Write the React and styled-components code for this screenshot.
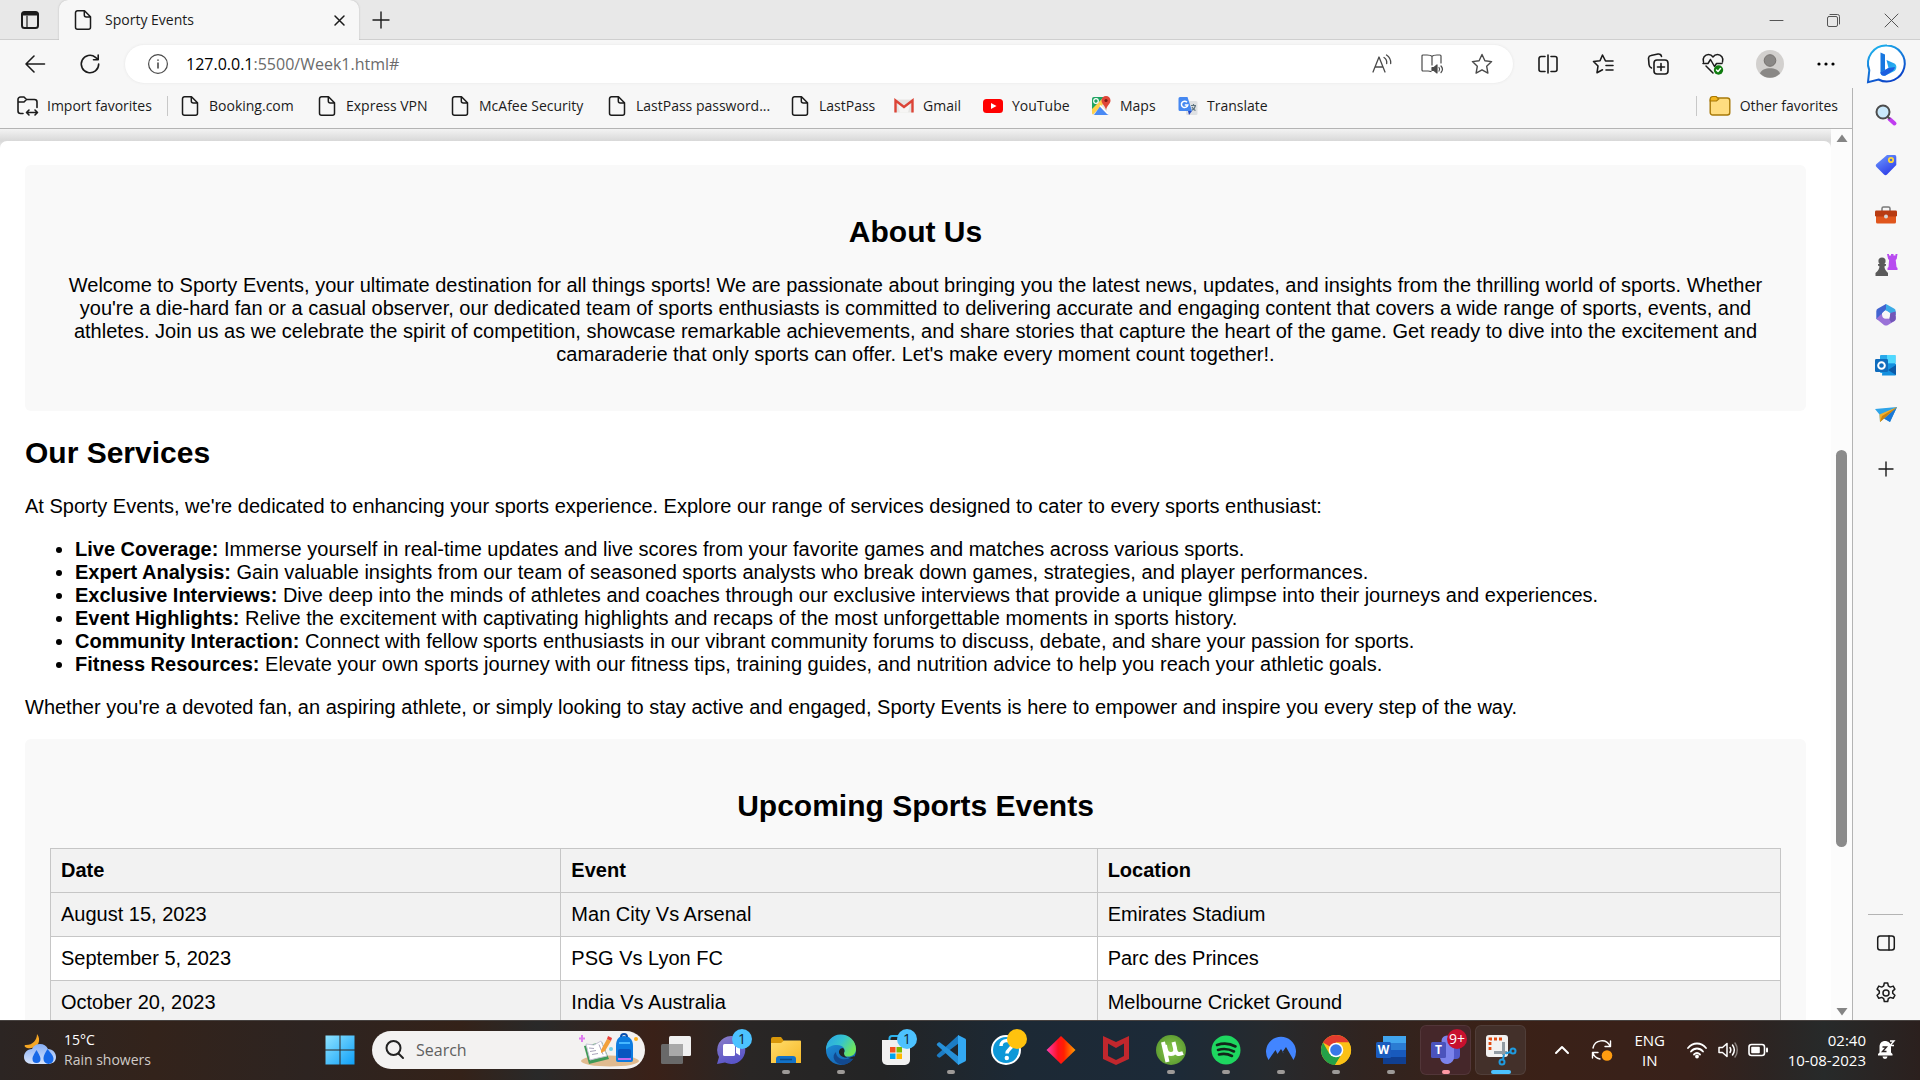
import React from "react";
import styled, { createGlobalStyle, css } from "styled-components";

const uiFont = `"Open Sans", "Noto Sans", sans-serif`;
const pageFont = `"Liberation Sans", Arial, sans-serif`;

const GlobalStyle = createGlobalStyle`
  *, *::before, *::after { box-sizing: border-box; }
  html, body, #root { height: 100%; }
  body { margin: 0; overflow: hidden; background: #f7f7f7; }
  button, input { font: inherit; color: inherit; border: 0; padding: 0; margin: 0; background: none; }
  svg { display: block; flex: none; overflow: visible; }
  a { color: inherit; text-decoration: none; }
`;

/* ---------- window ---------- */

const Desktop = styled.div`
  height: 100vh;
  display: flex;
  flex-direction: column;
  font-family: ${uiFont};
  font-size: 14px;
  line-height: 20px;
  color: #1b1b1b;
`;

const TabStrip = styled.header`
  flex: none;
  height: 40px;
  display: flex;
  align-items: stretch;
  background: #e8e8e8;
  box-shadow: inset 0 -1px 0 #cfcfcf;
`;

const IconButton = styled.button`
  flex: none;
  width: ${(p) => p.$w || 55}px;
  display: flex;
  align-items: center;
  justify-content: center;
`;

const Tab = styled.div`
  width: 300px;
  display: flex;
  align-items: center;
  gap: 12px;
  padding: 0 14px;
  background: #f7f7f7;
  border-radius: 9px 9px 0 0;
  box-shadow: 0 0 2px #b5b5b5;
  clip-path: inset(0 -3px 0 -3px);
`;

const TabTitle = styled.span`
  flex: 1;
`;

const WindowControls = styled.div`
  margin-left: auto;
  display: flex;
`;

const BrowserBody = styled.div`
  flex: 1;
  min-height: 0;
  display: flex;
`;

const MainColumn = styled.div`
  flex: 1;
  min-width: 0;
  display: flex;
  flex-direction: column;
`;

const Toolbar = styled.div`
  flex: none;
  height: 48px;
  display: flex;
  align-items: center;
  padding-left: 7px;
  background: #f7f7f7;
`;

const AddressBar = styled.div`
  flex: 1;
  height: 38px;
  margin: 0 7px 0 8px;
  padding: 0 6px 0 5px;
  display: flex;
  align-items: center;
  background: #fff;
  border-radius: 19px;
  box-shadow: 0 0 3px #e4e4e4;
  font-size: 16px;
`;

const Host = styled.label`
  margin-left: 1px;
  color: #000;
`;

const UrlInput = styled.input`
  flex: 1;
  min-width: 0;
  color: #6b6b6b;
  outline: none;
`;

const FavoritesBar = styled.nav`
  flex: none;
  height: 41px;
  display: flex;
  align-items: center;
  padding: 0 14px 4px 17px;
  background: #f7f7f7;
  border-bottom: 1px solid #b4b4b4;
`;

const Favorite = styled.a`
  width: ${(p) => p.$w}px;
  display: flex;
  align-items: center;
  gap: 9px;
  white-space: nowrap;
`;

const Divider = styled.span`
  width: 1px;
  height: 20px;
  margin-right: 12px;
  background: #c8c8c8;
`;

const PushRight = styled.div`
  margin-left: auto;
  display: flex;
  align-items: center;
`;

/* ---------- web page ---------- */

const Viewport = styled.div`
  flex: 1;
  min-height: 0;
  display: flex;
`;

const PageArea = styled.main`
  flex: 1;
  min-width: 0;
  overflow: hidden;
  padding-top: 12px;
  background: linear-gradient(#f3f3f3, #d8d8d8 12px, #fff 24px);
  font-family: ${pageFont};
  font-size: 20px;
  line-height: 23px;
  color: #000;
`;

const Sheet = styled.div`
  background: #fff;
  border-radius: 7px 7px 0 0;
  padding: 24px 25px;
`;

const Card = styled.section`
  display: flow-root;
  padding: 25px;
  background: #f9f9f9;
  border-radius: 6px;
  text-align: center;
`;

const Heading = styled.h2`
  margin: 25px 0;
  font-size: 30px;
  line-height: 34px;
`;

const Paragraph = styled.p`
  margin: 20px 0;
`;

const ServiceList = styled.ul`
  margin: 20px 0;
  padding-left: 50px;
`;

const EventTable = styled.table`
  width: 100%;
  border-collapse: collapse;
  background: #fff;
  text-align: left;
  th, td {
    border: 1px solid #c6c6c6;
    padding: 10px;
  }
  th, tbody tr:nth-child(odd) { background: #f2f2f2; }
  th:nth-child(1) { width: 29.5%; }
  th:nth-child(2) { width: 31%; }
`;

const ScrollBar = styled.div`
  flex: none;
  width: 21px;
  display: flex;
  flex-direction: column;
  align-items: center;
  padding: 5px 0 4px;
  background: #fcfcfc;
`;

const Thumb = styled.div`
  flex: 396;
  width: 11px;
  border-radius: 6px;
  background: #8b8b8b;
`;

const Space = styled.div`
  flex: ${(p) => p.$n};
`;

/* ---------- sidebar ---------- */

const SideColumn = styled.aside`
  flex: none;
  width: 68px;
  display: flex;
  flex-direction: column;
  background: #f7f7f7;
`;

const BingButton = styled(IconButton)`
  width: 68px;
  height: 48px;
`;

const SideRail = styled.div`
  flex: 1;
  display: flex;
  flex-direction: column;
  align-items: center;
  border-left: 1px solid #b4b4b4;
  padding: 2px 2px 2px 0;
`;

const SideButton = styled(IconButton)`
  width: 50px;
  height: 50px;
`;

const AddSideButton = styled(SideButton)`
  margin-top: 4px;
`;

const RailRule = styled.hr`
  width: 35px;
  margin: auto 0 3px;
  border: 0;
  border-top: 1px solid #b4b4b4;
`;

/* ---------- taskbar ---------- */

const Taskbar = styled.footer`
  flex: none;
  height: 60px;
  padding-bottom: 2px;
  display: flex;
  align-items: center;
  color: #fff;
  border-top: 1px solid #474240;
  background: linear-gradient(90deg, #2c2523 0%, #33231b 8%, #2d2421 16%, #342219 24%, #292929 28%,
    #3a2118 34%, #292625 39%, #232425 46%, #1c2935 53%, #1c2a38 61%, #262a2e 66%, #302420 71%, #3b2117 78%,
    #38211a 88%, #2c2422 92%, #272a2a 95%, #2b201e 100%);
`;

const Weather = styled.button`
  width: 312px;
  padding-left: 24px;
  display: flex;
  align-items: center;
  gap: 8px;
  text-align: left;
`;

const Stack = styled.span`
  display: flex;
  flex-direction: column;
  text-align: ${(p) => p.$align || "left"};
  line-height: 20px;
`;

const Soft = styled.span`
  color: #d0cbc8;
`;

const SearchBox = styled.label`
  width: 273px;
  height: 38px;
  margin: 0 3px 0 5px;
  padding: 0 6px 0 13px;
  display: flex;
  align-items: center;
  gap: 12px;
  border-radius: 19px;
  background: #f3f2f1;
  font-size: 16px;
`;

const SearchInput = styled.input`
  flex: 1;
  min-width: 0;
  outline: none;
  &::placeholder { color: #5f5f5f; opacity: 1; }
`;

const AppButton = styled.button`
  position: relative;
  flex: none;
  width: 51px;
  height: 50px;
  margin: 0 2px;
  display: flex;
  align-items: center;
  justify-content: center;
  border-radius: 6px;
  ${(p) => p.$tone && css`background: ${p.$tone}; box-shadow: inset 0 0 0 1px #ffffff12;`}
`;

const RunMark = styled.span`
  position: absolute;
  bottom: 1px;
  left: 50%;
  transform: translateX(-50%);
  width: ${(p) => (p.$active ? 20 : 8)}px;
  height: 4px;
  border-radius: 2px;
  background: ${(p) => p.$color || "#9d9a98"};
`;

const Badge = styled.span`
  position: absolute;
  top: 4px;
  right: 4px;
  width: 20px;
  height: 20px;
  border-radius: 50%;
  background: ${(p) => p.$bg};
  color: ${(p) => p.$fg || "#10222e"};
  font-size: 14px;
  line-height: 20px;
  text-align: center;
`;

const Tray = styled.div`
  margin-left: auto;
  padding-right: 24px;
  display: flex;
  align-items: center;
  font-size: 15px;
`;

const TrayButton = styled.button`
  width: ${(p) => p.$w}px;
  height: 48px;
  display: flex;
  align-items: center;
  justify-content: center;
`;

const Clock = styled.button`
  display: flex;
  align-items: center;
  gap: 10px;
  margin-left: 12px;
`;

/* ---------- drawings ---------- */

const Svg = ({ w = 20, h, vb = "0 0 20 20", sw = 1.4, stroke = "#1b1b1b", children }) => (
  <svg width={w} height={h || w} viewBox={vb} fill="none" stroke={stroke} strokeWidth={sw} strokeLinecap="round" strokeLinejoin="round" aria-hidden="true">
    {children}
  </svg>
);
const F = ({ w = 30, h, vb = "0 0 30 30", children }) => (
  <svg width={w} height={h || w} viewBox={vb} aria-hidden="true">{children}</svg>
);

const DocIcon = () => (
  <Svg sw={1.5}><path d="M4.500 .8h7l6 6v10.400a2 2 0 0 1-2 2h-11a2 2 0 0 1-2-2v-14.400a2 2 0 0 1 2-2z M11.300 1v4a2 2 0 0 0 2 2h4" /></Svg>
);
const Star = () => (
  <Svg w={22} vb="0 0 22 22" stroke="#4a4a4a"><path d="M11 1.500l2.900 6.200 6.700.9-4.900 4.700 1.200 6.800L11 16.800l-5.900 3.300 1.200-6.800L1.400 8.600l6.700-.9z" /></Svg>
);

const GmailIcon = () => (
  <F w={20} vb="0 0 20 20"><path d="M1 3.500h18v13H1z" fill="#e6e4e2" /><path d="M3 5l7 6 7-6-3 11.500H6z" fill="#f6f5f4" /><path d="M1.500 16.500V4.500L10 11l8.500-6.500v12" fill="none" stroke="#dc4437" strokeWidth="2.400" /></F>
);
const YouTubeIcon = () => (
  <F w={20} vb="0 0 20 20"><rect y="3" width="20" height="14" rx="3.500" fill="#f00" /><path d="M8 7l5.500 3L8 13z" fill="#fff" /></F>
);
const MapsIcon = () => (
  <F w={20} vb="0 0 20 20"><path d="M1 3a2 2 0 0 1 2-2h13v17a1 1 0 0 1-1 1H3a2 2 0 0 1-2-2z" fill="#e8e6e0" /><path d="M1 3a2 2 0 0 1 2-2h10L1 14z" fill="#1fa463" /><path d="M1 13L13 1l2 4L2 18.500l-1-1z" fill="#ffd04b" /><path d="M9 10.500l8.500 8.500H3z" fill="#4a8af4" /><path d="M9 9.500l8 8.500" stroke="#fff" strokeWidth="1.500" /><path d="M15 0a4.500 4.500 0 0 1 4.500 4.500C19.500 8 16 9 15 14c-1-5-4.500-6-4.500-9.500A4.500 4.500 0 0 1 15 0z" fill="#e04638" /><circle cx="15" cy="4.500" r="1.600" fill="#7b1c15" /><circle cx="5" cy="5" r="2.300" fill="none" stroke="#fff" strokeWidth="1.200" /></F>
);
const TranslateIcon = () => (
  <F w={20} vb="0 0 20 20"><rect x="8" y="5" width="11.500" height="14" rx="1.500" fill="#dfe1e3" /><path d="M13 9.500h5M15.500 8v1.500M17.500 9.500c-.6 2.500-2 4-3.500 4.800M14 11c.8 1.600 2 2.800 3.500 3.500" stroke="#607580" fill="none" strokeWidth="1.200" /><path d="M2 1h7.500L14 15H2a1.500 1.500 0 0 1-1.500-1.500v-11A1.500 1.500 0 0 1 2 1z" fill="#4688f1" /><path d="M10 15h4l-3 4z" fill="#2447c4" /><path d="M9 6.200A3.200 3.200 0 1 0 9.800 9H6.800" stroke="#fff" fill="none" strokeWidth="1.500" /></F>
);
const FolderYellow = () => (
  <F w={22} h={22} vb="0 0 22 22"><rect x="1.200" y="3" width="19.600" height="17" rx="2.500" fill="#ffdd80" stroke="#a87908" strokeWidth="1.400" /><path d="M1.200 6V4a2.500 2.500 0 0 1 2.500-2.500h3.500L9.800 4 7.500 6z" fill="#f2b61e" stroke="#a87908" strokeWidth="1.200" /></F>
);
const ImportIcon = () => (
  <Svg w={21} h={20} vb="0 0 21 20" sw={1.600}><path d="M6 17.500H3.500A2.500 2.500 0 0 1 1 15V3.500A2.500 2.500 0 0 1 3.500 1H7l2.500 2.500h8A2.500 2.500 0 0 1 20 6v5.500M1 6h6l2.500-2.500M10 16.500h10M12 14l-2.500 2.500L12 19M18 14l2.500 2.500L18 19" /></Svg>
);

const Bing = () => (
  <F w={40} vb="0 0 40 40">
    <defs><linearGradient id="bg1" x1="0" y1="0" x2="0.500" y2="1"><stop offset="0" stopColor="#20bdf0" /><stop offset="1" stopColor="#0b45c9" /></linearGradient>
      <linearGradient id="bg2" x1="0" y1="0" x2="1" y2="1"><stop offset="0" stopColor="#1685e8" /><stop offset="1" stopColor="#35c8f5" /></linearGradient></defs>
    <path d="M21 1.500a18 18 0 1 1-8.500 34L2 38.200l1.300-12A18 18 0 0 1 21 1.500z" fill="#fff" stroke="url(#bg1)" strokeWidth="2" />
    <path d="M14.500 8.500l4.500 2v15.500l-4.500 3.500z" fill="#1877e0" /><path d="M20.500 16l8 3.500c2.500 1.500 2.500 5.500 0 7.500l-9 4.500c-2.500 1-5-.5-5-3l8-4.500z" fill="url(#bg2)" /><path d="M14.500 28.500l8-4.500 6.500-1c-.5 2.500-2 4-4 5l-5.500 3.500c-2.500 1-5-.5-5-3z" fill="#1d5fe0" />
  </F>
);

const SideSearch = () => (
  <F w={22} vb="0 0 22 22"><path d="M14.500 15l5 4.500" stroke="#c03df0" strokeWidth="4" strokeLinecap="round" /><path d="M12 12l3 3" stroke="#555" strokeWidth="2" /><circle cx="8" cy="8" r="6.500" fill="#c9e8fb" stroke="#4c4c4c" strokeWidth="2" /></F>
);
const SideTag = () => (
  <F w={22} vb="0 0 22 22"><defs><linearGradient id="tg" x1="0" y1="0" x2=".6" y2="1"><stop stopColor="#6f9cff" /><stop offset="1" stopColor="#2f3fe8" /></linearGradient></defs><path d="M12 1h7.500A1.800 1.800 0 0 1 21.300 3v8L12 20.500c-1 1-2 1-3 0L1.500 13c-1-1-1-2 0-3z" fill="url(#tg)" /><circle cx="16" cy="6" r="2.200" fill="#4b6ad8" stroke="#ffd83a" strokeWidth="1.800" /></F>
);
const SideTools = () => (
  <F w={22} vb="0 0 22 22"><path d="M7 7V4.500A1.500 1.500 0 0 1 8.500 3h5A1.500 1.500 0 0 1 15 4.500V7" fill="none" stroke="#7a7a7a" strokeWidth="1.500" /><rect x="1" y="9" width="20" height="10.500" rx="1.500" fill="#e0561d" /><rect y="6.500" width="22" height="6" rx="1.200" fill="#b83b12" /><circle cx="11" cy="12.500" r="2" fill="#d5d5d5" /></F>
);
const SideGames = () => (
  <F w={24} h={22} vb="0 0 24 22"><path d="M13 0h2v1.500h2V0h2.500v1.500h2V0h2l-.8 5-1 1 .8 7 1 1v2h-10v-2l1-1 .6-7-1-1z" fill="#b84bf0" /><g fill="#5a5a5a"><circle cx="8" cy="7" r="3.600" /><path d="M4 10h8v1.500l-1.600 1c.2 2.500 1.200 4 3.600 6.500v3H1.500v-3C4 17 5.200 15 5.500 12.500L4 11.500z" /></g></F>
);
const SideOffice = () => (
  <F w={22} vb="0 0 22 22"><path d="M11 0l8 4.500a3 3 0 0 1 1.700 2.700v4L14 8.500l-3.300-2.200L7.500 8z" fill="#3cabe6" /><path d="M11 0L3 4.500a3 3 0 0 0-1.700 2.700V15l5.700 2.200V9.500L11 5z" fill="#4264d0" /><path d="M1.300 14.800L9 21a4 4 0 0 0 4 0l6.500-4a3 3 0 0 0 1.300-2.500V12l-6.500 3-5-2-3-3z" fill="#9a72d8" /><path d="M20.700 7.500v7a3 3 0 0 1-1.400 2.500l-3 1.500-2-3.500 1-6z" fill="#7257b8" /><circle cx="11" cy="11" r="3.800" fill="#f7f7f7" /></F>
);
const SideOutlook = () => (
  <F w={22} vb="0 0 22 22"><rect x="5" y="1" width="15.500" height="18" rx="1" fill="#28a8ea" /><path d="M12 1h8.500v8H12z" fill="#50d9ff" /><path d="M8 10h13v10.500a1 1 0 0 1-1 1H7z" fill="#1490df" /><path d="M21 11v10l-8-5z" fill="#0c5aa8" /><rect y="5" width="13" height="13" rx="1.200" fill="#0f6cbd" /><circle cx="6.500" cy="11.500" r="3.300" fill="none" stroke="#fff" strokeWidth="2" /></F>
);
const SidePlane = () => (
  <F w={22} vb="0 0 22 22"><path d="M0 5l22-2-7 15-6-3.500L5 18l-.500-7.500z" fill="#2fa4e8" /><path d="M22 3L9 14.500l6 3.500z" fill="#1a77d6" /><path d="M22 3L4.500 10.500 5 18l4-3.500z" fill="#f5b02a" /><path d="M22 3L9 14.500 5 18l2-6z" fill="#c98212" /></F>
);
const Gear = () => (
  <Svg w={22} vb="0 0 22 22" sw={1.500}><circle cx="11" cy="11" r="3" /><path d="M9.300 1h3.400l.6 2.900 2 1.200 2.900-1 1.700 3-2.200 2v2.200l2.200 2-1.700 3-2.900-.9-2 1.200-.6 2.900H9.300l-.6-2.900-2-1.200-2.900.9-1.700-3 2.200-2V9.100l-2.200-2 1.700-3 2.900 1 2-1.200z" /></Svg>
);

const WeatherIcon = () => (
  <F w={32} vb="0 0 32 32"><defs><linearGradient id="cl" x1="0" y1="0" x2="0" y2="1"><stop stopColor="#86aef5" /><stop offset="1" stopColor="#d7e4fb" /></linearGradient></defs><path d="M13 0c5 6 1 16-10 14C0 13 0 11 2 11 9 11 13 6 13 0z" fill="#f5a623" /><path d="M8 15a9 9 0 0 1 16 0c5 0 8 4 8 8 0 5-4 7-8 7H8c-5 0-8-3-8-7s3-8 8-8z" fill="url(#cl)" /><path d="M12.500 16c3 5 4 7 4 9a4 4 0 0 1-8 0c0-2 1-4 4-9zM23.500 15c4 5 6 7 6 10a5 5 0 0 1-10 0c0-3 1-5 4-10z" fill="#1668e8" /></F>
);
const WinLogo = () => (
  <F><defs><linearGradient id="wn" x1="0" y1="0" x2="1" y2="1"><stop stopColor="#8fe3ff" /><stop offset="1" stopColor="#0fa0f8" /></linearGradient></defs><path d="M.5 .5h14v14H.500zM15.500 .5h14v14h-14zM.5 15.500h14v14H.500zM15.500 15.500h14v14h-14z" fill="url(#wn)" /></F>
);
const SearchArt = () => (
  <F w={60} h={34} vb="0 0 60 34"><ellipse cx="31" cy="28" rx="29" ry="5.500" fill="#e0bb8f" /><path d="M5 13l18-4 7 17-20 5z" fill="#3f9a57" /><path d="M7 11l8 1 7-4 6 15-9 2-8 2z" fill="#fff" stroke="#c8c4d8" /><path d="M10 15l5 .5m-4 3l6-1m-4 4l6-1m1-9l4 10" stroke="#a9a4bb" fill="none" /><path d="M22 17l6-11 4 2-6 10-4 2z" fill="#f3a13a" /><path d="M28 6l1-3 4 2-1 3z" fill="#e8413a" /><path d="M3 2v7M0 5.500h6" stroke="#e07cf0" strokeWidth="2" /><circle cx="32" cy="16" r="2" fill="#6fd0e8" /><circle cx="57" cy="6" r="2" fill="#ffb11f" /><path d="M37 13c0-7 3-10 8-10s9 3 9 10v14a2 2 0 0 1-2 2H39a2 2 0 0 1-2-2z" fill="#0c7be0" /><path d="M42 4c0-4 6-4 6 0" fill="none" stroke="#0a4fae" strokeWidth="2" /><rect x="39" y="16" width="13" height="9" rx="2" fill="#0a56c0" /><path d="M39 26h13" stroke="#c66cf0" strokeWidth="2" /><path d="M40 10h11" stroke="#46b8ff" strokeWidth="2" /></F>
);
const TaskView = () => (
  <F><rect x="8" y="1" width="22" height="20" rx="1.500" fill="#f0f0f0" /><rect x="0" y="9" width="22" height="20" rx="1.500" fill="#696969" /><path d="M8 9h14v12H8z" fill="#a9a9a9" /></F>
);
const ChatIcon = () => (
  <F><defs><linearGradient id="ct" x1="0" y1="0" x2=".4" y2="1"><stop stopColor="#8b7fc8" /><stop offset="1" stopColor="#5a55c8" /></linearGradient></defs><path d="M15 1a14 14 0 1 1-6 26.500L1 29l2-7A14 14 0 0 1 15 1z" fill="url(#ct)" /><rect x="7" y="9" width="12" height="12" rx="1.500" fill="#fff" /><path d="M20 12l4-2.500v11L20 18z" fill="#fff" /></F>
);
const Explorer = () => (
  <F><defs><linearGradient id="ex" x1="0" y1="0" x2="1" y2="1"><stop stopColor="#ffdc6b" /><stop offset="1" stopColor="#f7b928" /></linearGradient></defs><path d="M0 4a2 2 0 0 1 2-2h8l3 4h15a2 2 0 0 1 2 2v20H0z" fill="#d8970a" /><path d="M0 8h10l3-2.500h16a1 1 0 0 1 1 1V28H0z" fill="url(#ex)" /><path d="M5 28v-4a3 3 0 0 1 3-3h14a3 3 0 0 1 3 3v4z" fill="#1272c8" /><path d="M9 24.500h12" stroke="#0b4a87" strokeWidth="1.500" /></F>
);
const EdgeIcon = () => (
  <F>
    <defs>
      <linearGradient id="eg" x1="0" y1="0" x2="1" y2=".5"><stop stopColor="#2aa0e8" /><stop offset=".55" stopColor="#35c4cf" /><stop offset="1" stopColor="#6ee65c" /></linearGradient>
      <linearGradient id="eg2" x1="0" y1="0" x2=".6" y2="1"><stop stopColor="#1f97dd" /><stop offset="1" stopColor="#1565b5" /></linearGradient>
    </defs>
    <circle cx="15" cy="15" r="15" fill="url(#eg2)" />
    <path d="M0 15A15 15 0 0 1 30 14c0 5-3.500 7.500-8 7.500-4 0-5-1.500-4-3.500 2-4-1-8-7-8C6 10 2 12 0 15z" fill="url(#eg)" />
    <path d="M10 17c0 7 8 9.500 18.200 5A15 15 0 0 1 17 29.900C8 29 5 21 10 17z" fill="#12498f" />
    <path d="M18 18c1-2 .5-4-1-5-3 0-5 3-3.500 6 2.500 4 8 5 14 2.300l3.500 1-1.500 1.500C22 24 18 22 18 18z" fill="#232425" />
  </F>
);
const StoreIcon = () => (
  <F><path d="M8.500 7V3.500A2.500 2.500 0 0 1 11 1h8a2.500 2.500 0 0 1 2.500 2.500V7" fill="none" stroke="#2cb2ec" strokeWidth="2" /><path d="M1 5h28v20a5 5 0 0 1-5 5H6a5 5 0 0 1-5-5z" fill="#f1f1f1" /><path d="M9 12h5.500v5.500H9z" fill="#f25022" /><path d="M15.500 12H21v5.500h-5.500z" fill="#7fba00" /><path d="M9 18.500h5.500V24H9z" fill="#00a4ef" /><path d="M15.500 18.500H21V24h-5.500z" fill="#ffb900" /></F>
);
const CodeIcon = () => (
  <F><path d="M23 8L4 22.500c-1 .8-4-1.500-3-2.700L22.500 0z" fill="#1c7cc4" /><path d="M23 22L4 7.500C3 6.700 0 9 1 10.200L22.500 30z" fill="#2690d8" /><path d="M22 0l7 3.500a1.800 1.800 0 0 1 1 1.500v20a1.800 1.800 0 0 1-1 1.500L22 30z" fill="#33a8f2" /></F>
);
const HelpIcon = () => (
  <F><circle cx="15" cy="15" r="14" fill="#0e98d8" stroke="#fff" strokeWidth="2" /><path d="M10 11c0-7 11-7 11-1 0 4-5 4-5 8.500" fill="none" stroke="#fff" strokeWidth="3.500" /><circle cx="15.800" cy="23" r="2.200" fill="#fff" /></F>
);
const DiamondIcon = () => (
  <F><defs><linearGradient id="dm"><stop stopColor="#ff3eb0" /><stop offset=".4" stopColor="#ff1020" /><stop offset=".6" stopColor="#ff2000" /><stop offset="1" stopColor="#ffa000" /></linearGradient></defs><path d="M15 1l14.500 14L15 29 .5 15z" fill="url(#dm)" /></F>
);
const McAfeeIcon = () => (
  <F><path d="M2 1l13 6 13-6v23l-13 6-13-6zM7 8.500V21l8 4 8-4V8.500L15 13z" fill="#c1272d" fillRule="evenodd" /></F>
);
const TorrentIcon = () => (
  <F><defs><radialGradient id="ut"><stop stopColor="#8ccb4c" /><stop offset="1" stopColor="#5f9e33" /></radialGradient></defs><circle cx="15" cy="15" r="15" fill="url(#ut)" /><path d="M7 7l4.500 20M9 10c1 8 3 9 6 9s5-2 4-6l-1.500-6m1.500 7c1 5 3 6 8 4" fill="none" stroke="#fff" strokeWidth="4" /></F>
);
const SpotifyIcon = () => (
  <F><circle cx="15" cy="15" r="14.500" fill="#1ed760" /><path d="M6 10c6-2 13-1.500 18.500 1.500M7 15c5-1.500 11-1 16 1.500M8 19.500c4-1 9-.6 13 1.500" fill="none" stroke="#12251a" strokeWidth="2.600" strokeLinecap="round" /></F>
);
const NordIcon = () => (
  <F><path d="M2.500 25A15 15 0 1 1 27.500 25L20 12l-3.500 5 1.500 1.500L15 14l-3.500 5L9.500 15z" fill="#4285ff" /></F>
);
const ChromeIcon = () => (
  <F><circle cx="15" cy="15" r="15" fill="#fbc116" /><path d="M15 15L2 7.500A15 15 0 0 1 28 7.500H15z" fill="#e33b2e" /><path d="M2 7.500A15 15 0 0 0 14 30l7.500-12L15 15 8.500 19z" fill="#24a148" /><path d="M15 7.500h13A15 15 0 0 1 14 30l7.500-12z" fill="#fbc116" /><circle cx="15" cy="15" r="7.300" fill="#fff" /><circle cx="15" cy="15" r="5.800" fill="#3878e8" /></F>
);
const LetterText = styled.text`
  font: 700 12px ${uiFont};
  fill: #fff;
  text-anchor: middle;
`;
const WordIcon = () => (
  <F><rect x="7" y="1" width="23" height="28" rx="1.500" fill="#185abd" /><path d="M7 1h23v7H7z" fill="#41a5ee" /><path d="M7 8h23v7H7z" fill="#2b7cd3" /><path d="M7 22h23v7H7z" fill="#103f91" /><rect y="7" width="15" height="16" rx="1.500" fill="#1b5cbe" /><LetterText x="7.500" y="19">W</LetterText></F>
);
const TeamsIcon = () => (
  <F><circle cx="16" cy="6" r="5.500" fill="#7b83eb" /><rect x="19" y="11" width="10" height="13" rx="4" fill="#5059c9" /><path d="M10 10h13v11a7 7 0 0 1-14 2z" fill="#7b83eb" /><rect y="7" width="15" height="16" rx="1.500" fill="#4b53bc" /><LetterText x="7.500" y="19">T</LetterText></F>
);
const SnipIcon = () => (
  <F w={32} vb="0 0 32 32"><rect x="1" y="1" width="22" height="22" rx="3" fill="#f2f2f2" /><path d="M17 5H5v12" fill="none" stroke="#e04a10" strokeWidth="2.800" strokeDasharray="3 2" /><path d="M18.500 8v13M9 18.500h13" stroke="#929ca4" strokeWidth="3" /><circle cx="28" cy="17" r="2.500" fill="none" stroke="#1f9be0" strokeWidth="2" /><circle cx="17" cy="28" r="2.500" fill="none" stroke="#1f9be0" strokeWidth="2" /><path d="M25.500 18l-5 1.500M18 25.500l1-5" stroke="#1f9be0" strokeWidth="2" /></F>
);

/* ---------- data ---------- */

const favorites = [
  ["Booking.com", 137, DocIcon],
  ["Express VPN", 133, DocIcon],
  ["McAfee Security", 157, DocIcon],
  ["LastPass password...", 183, DocIcon],
  ["LastPass", 104, DocIcon],
  ["Gmail", 89, GmailIcon],
  ["YouTube", 108, YouTubeIcon],
  ["Maps", 87, MapsIcon],
  ["Translate", 90, TranslateIcon],
];

const services = [
  ["Live Coverage:", "Immerse yourself in real-time updates and live scores from your favorite games and matches across various sports."],
  ["Expert Analysis:", "Gain valuable insights from our team of seasoned sports analysts who break down games, strategies, and player performances."],
  ["Exclusive Interviews:", "Dive deep into the minds of athletes and coaches through our exclusive interviews that provide a unique glimpse into their journeys and experiences."],
  ["Event Highlights:", "Relive the excitement with captivating highlights and recaps of the most unforgettable moments in sports history."],
  ["Community Interaction:", "Connect with fellow sports enthusiasts in our vibrant community forums to discuss, debate, and share your passion for sports."],
  ["Fitness Resources:", "Elevate your own sports journey with our fitness tips, training guides, and nutrition advice to help you reach your athletic goals."],
];

const events = [
  ["August 15, 2023", "Man City Vs Arsenal", "Emirates Stadium"],
  ["September 5, 2023", "PSG Vs Lyon FC", "Parc des Princes"],
  ["October 20, 2023", "India Vs Australia", "Melbourne Cricket Ground"],
];

const sideApps = [
  ["Search sidebar", SideSearch], ["Shopping", SideTag], ["Tools", SideTools], ["Games", SideGames],
  ["Microsoft 365", SideOffice], ["Outlook", SideOutlook], ["Drop", SidePlane],
];

const apps = [
  { name: "Task view", Icon: TaskView },
  { name: "Chat", Icon: ChatIcon, badge: "1", bg: "#4cc2ff" },
  { name: "File Explorer", Icon: Explorer, run: true },
  { name: "Edge", Icon: EdgeIcon, run: true },
  { name: "Store", Icon: StoreIcon, badge: "1", bg: "#4cc2ff" },
  { name: "Code", Icon: CodeIcon, run: true },
  { name: "Help", Icon: HelpIcon, badge: "", bg: "#ffc20e" },
  { name: "Diamond", Icon: DiamondIcon },
  { name: "Antivirus", Icon: McAfeeIcon },
  { name: "Torrent", Icon: TorrentIcon, run: true },
  { name: "Spotify", Icon: SpotifyIcon, run: true },
  { name: "VPN", Icon: NordIcon, run: true },
  { name: "Chrome", Icon: ChromeIcon, run: true },
  { name: "Word", Icon: WordIcon, run: true },
  { name: "Teams", Icon: TeamsIcon, run: true, mark: "#ff99a4", tone: "#45272a", badge: "9+", bg: "#c8102e", fg: "#fff" },
  { name: "Snipping Tool", Icon: SnipIcon, run: true, active: true, mark: "#4cc2ff", tone: "#43302a" },
];

export default function App() {
  return (
    <Desktop>
      <GlobalStyle />
      <TabStrip>
        <IconButton $w={59} aria-label="Tab actions">
          <Svg w={18} vb="0 0 18 18" sw={2}><rect x="1" y="1" width="16" height="16" rx="2.500" /><path d="M2 3h14" strokeWidth="3" /><path d="M6 5v11" strokeWidth="1.200" /></Svg>
        </IconButton>
        <Tab>
          <DocIcon />
          <TabTitle>Sporty Events</TabTitle>
          <IconButton $w={12} aria-label="Close tab"><Svg w={11} vb="0 0 11 11" sw={1.500}><path d="M1 1l9 9M10 1l-9 9" /></Svg></IconButton>
        </Tab>
        <IconButton $w={44} aria-label="New tab"><Svg w={18} vb="0 0 18 18"><path d="M9 1v16M1 9h16" /></Svg></IconButton>
        <WindowControls>
          <IconButton $w={57} aria-label="Minimize"><Svg w={13} vb="0 0 13 13" sw={1} stroke="#555"><path d="M0 6.500h13" /></Svg></IconButton>
          <IconButton $w={57} aria-label="Restore"><Svg w={13} vb="0 0 13 13" sw={1} stroke="#555"><rect x=".5" y="2.500" width="10" height="10" rx="1.500" /><path d="M3 .5h7.500a2 2 0 0 1 2 2V10" /></Svg></IconButton>
          <IconButton $w={58} aria-label="Close"><Svg w={13} vb="0 0 13 13" sw={1} stroke="#555"><path d="M0 0l13 13M13 0L0 13" /></Svg></IconButton>
        </WindowControls>
      </TabStrip>

      <BrowserBody>
        <MainColumn>
          <Toolbar>
            <IconButton aria-label="Back"><Svg sw={1.600}><path d="M19.500 10H1M9 2L1 10l8 8" /></Svg></IconButton>
            <IconButton aria-label="Refresh"><Svg sw={1.600}><path d="M18.700 10A8.700 8.700 0 1 1 15.500 3.300l2.500 2.200M18.200 1v4.700h-4.700" /></Svg></IconButton>
            <AddressBar>
              <IconButton aria-label="Site information"><Svg sw={1.200} stroke="#4a4a4a"><circle cx="10" cy="10" r="9.400" /><path d="M10 9v5M10 6v.2" strokeWidth="1.600" /></Svg></IconButton>
              <Host htmlFor="address">127.0.0.1</Host>
              <UrlInput id="address" defaultValue=":5500/Week1.html#" />
              <IconButton $w={50} aria-label="Read aloud"><Svg stroke="#4a4a4a" sw={1.300}><path d="M1 18L7 3l6 15M3.200 13h7.600M12 3.500c2 1.200 3 3.500 2.700 6M14.500 1c3 2 4.500 5 4.200 8.500" /></Svg></IconButton>
              <IconButton $w={50} aria-label="Reader"><Svg w={22} vb="0 0 22 22" stroke="#4a4a4a" sw={1.200}><path d="M11 3.500V12M10 18.500C9 18 8 18 7 18H2a1 1 0 0 1-1-1V3a1 1 0 0 1 1-1h4c2 0 4 0 5 1.500C12 2 14 2 16 2h3a1 1 0 0 1 1 1v7" /><path d="M11 14.500h2l3-2.500v8l-3-2.500h-2z" fill="#4a4a4a" /><path d="M18 14.500c.8 1 .8 2.500 0 3.500M20 13c1.800 2 1.800 4.500 0 6.500" /></Svg></IconButton>
              <IconButton $w={50} aria-label="Add to favorites"><Star /></IconButton>
            </AddressBar>
            <IconButton aria-label="Split screen"><Svg sw={1.600}><path d="M7 2.500H3a2 2 0 0 0-2 2v11a2 2 0 0 0 2 2h4M13 2.500h4a2 2 0 0 1 2 2v11a2 2 0 0 1-2 2h-4M10 1v18" /></Svg></IconButton>
            <IconButton aria-label="Favorites"><Svg w={22} vb="0 0 22 22" sw={1.600}><path d="M21 8h-7.500L10.500 2 8 7.700 1.500 8.500l4.500 4.500L5 19.800l5.500-3M14 12.500h7M14 17h7" /></Svg></IconButton>
            <IconButton aria-label="Collections"><Svg w={22} vb="0 0 22 22" sw={1.600}><rect x="7" y="7" width="14" height="14" rx="3" /><path d="M14 10.500v7M10.500 14h7M4.500 15A4 4 0 0 1 2 11.500L1.500 5a3 3 0 0 1 2.500-2.500L11 1a3 3 0 0 1 3.500 2.500" /></Svg></IconButton>
            <IconButton aria-label="Browser essentials"><Svg w={22} vb="0 0 22 22" sw={1.500}><path d="M1.500 9C0 5 3 1.500 6.500 1.500c2 0 3.500 1 4.500 2.500 1-1.500 2.500-2.500 4.500-2.500C19 1.500 22 5 20.500 9M1 10.500h5l2.500-4 4 7 2-3H20M4 13l7 7" /><circle cx="16.500" cy="17" r="4.700" fill="#107c10" stroke="none" /><path d="M14.500 17l1.500 1.500 2.500-3" stroke="#fff" /></Svg></IconButton>
            <IconButton $w={60} aria-label="Profile"><F w={28} vb="0 0 28 28"><circle cx="14" cy="14" r="14" fill="#d2d0ce" /><circle cx="14" cy="10.500" r="5.800" fill="#8a8886" stroke="#75716e" /><path d="M4 23.500c2-7 18-7 20 0a14 14 0 0 1-20 0z" fill="#8a8886" /></F></IconButton>
            <IconButton $w={52} aria-label="More"><F w={20} vb="0 0 20 20"><circle cx="3" cy="10" r="1.600" /><circle cx="10" cy="10" r="1.600" /><circle cx="17" cy="10" r="1.600" /></F></IconButton>
          </Toolbar>
          <FavoritesBar>
            <Favorite href="#" $w={150}><ImportIcon />Import favorites</Favorite>
            <Divider />
            {favorites.map(([label, w, Icon]) => (
              <Favorite key={label} href="#" $w={w}><Icon />{label}</Favorite>
            ))}
            <PushRight>
              <Divider />
              <Favorite href="#"><FolderYellow />Other favorites</Favorite>
            </PushRight>
          </FavoritesBar>
          <Viewport>
            <PageArea>
              <Sheet>
                <Card>
                  <Heading>About Us</Heading>
                  <Paragraph>
                    Welcome to Sporty Events, your ultimate destination for all things sports! We are passionate about bringing you the latest news, updates, and insights from the thrilling world of sports. Whether you're a die-hard fan or a casual observer, our dedicated team of sports enthusiasts is committed to delivering accurate and engaging content that covers a wide range of sports, events, and athletes. Join us as we celebrate the spirit of competition, showcase remarkable achievements, and share stories that capture the heart of the game. Get ready to dive into the excitement and camaraderie that only sports can offer. Let's make every moment count together!.
                  </Paragraph>
                </Card>
                <Heading>Our Services</Heading>
                <Paragraph>At Sporty Events, we're dedicated to enhancing your sports experience. Explore our range of services designed to cater to every sports enthusiast:</Paragraph>
                <ServiceList>
                  {services.map(([name, text]) => (
                    <li key={name}><strong>{name}</strong> {text}</li>
                  ))}
                </ServiceList>
                <Paragraph>Whether you're a devoted fan, an aspiring athlete, or simply looking to stay active and engaged, Sporty Events is here to empower and inspire you every step of the way.</Paragraph>
                <Card>
                  <Heading>Upcoming Sports Events</Heading>
                  <EventTable>
                    <thead><tr><th>Date</th><th>Event</th><th>Location</th></tr></thead>
                    <tbody>
                      {events.map((row) => (
                        <tr key={row[0]}>{row.map((cell) => <td key={cell}>{cell}</td>)}</tr>
                      ))}
                    </tbody>
                  </EventTable>
                </Card>
              </Sheet>
            </PageArea>
            <ScrollBar>
              <F w={12} h={8} vb="0 0 12 8"><path d="M6 .5L11.500 8H.500z" fill="#858585" /></F>
              <Space $n={307} />
              <Thumb />
              <Space $n={161} />
              <F w={12} h={8} vb="0 0 12 8"><path d="M6 7.500L11.500 0H.500z" fill="#858585" /></F>
            </ScrollBar>
          </Viewport>
        </MainColumn>

        <SideColumn>
          <BingButton aria-label="Bing"><Bing /></BingButton>
          <SideRail>
            {sideApps.map(([name, Icon]) => (
              <SideButton key={name} aria-label={name}><Icon /></SideButton>
            ))}
            <AddSideButton aria-label="Customize"><Svg w={16} vb="0 0 16 16"><path d="M8 1v14M1 8h14" /></Svg></AddSideButton>
            <RailRule />
            <SideButton aria-label="Hide sidebar"><Svg w={18} h={16} vb="0 0 18 16" sw={1.500}><rect x=".7" y="1" width="16.600" height="14" rx="2.500" /><path d="M12 1v14" /></Svg></SideButton>
            <SideButton aria-label="Settings"><Gear /></SideButton>
          </SideRail>
        </SideColumn>
      </BrowserBody>

      <Taskbar>
        <Weather>
          <WeatherIcon />
          <Stack><span>15°C</span><Soft>Rain showers</Soft></Stack>
        </Weather>
        <AppButton aria-label="Start"><WinLogo /></AppButton>
        <SearchBox>
          <Svg w={19} vb="0 0 19 19" sw={2} stroke="#222"><circle cx="8.500" cy="8" r="7" /><path d="M13.500 13.500l4.500 4.500" /></Svg>
          <SearchInput aria-label="Search" placeholder="Search" />
          <SearchArt />
        </SearchBox>
        {apps.map(({ name, Icon, run, active, mark, tone, badge, bg, fg }) => (
          <AppButton key={name} aria-label={name} $tone={tone}>
            <Icon />
            {badge !== undefined && <Badge $bg={bg} $fg={fg}>{badge}</Badge>}
            {run && <RunMark $active={active} $color={mark} />}
          </AppButton>
        ))}
        <Tray>
          <TrayButton $w={40} aria-label="Hidden icons"><Svg w={14} h={8} vb="0 0 14 8" sw={2} stroke="#fff"><path d="M1 7l6-6 6 6" /></Svg></TrayButton>
          <TrayButton $w={40} aria-label="Update"><Svg w={22} vb="0 0 22 22" stroke="#fff"><path d="M2 9a9 9 0 0 1 17-2M19.500 2v5.500H14M9 20a9 9 0 0 1-7-6M1.500 19v-5.500H7" /><circle cx="16" cy="16.500" r="5.300" fill="#ff9c10" stroke="none" /></Svg></TrayButton>
          <TrayButton $w={56}><Stack $align="center"><span>ENG</span><span>IN</span></Stack></TrayButton>
          <TrayButton $w={38} aria-label="Network"><Svg stroke="#fff" sw={1.800}><path d="M1 8c5-6 13-6 18 0M4 11.500c3.500-4 8.500-4 12 0M7 14.500c2-2 4-2 6 0" /><circle cx="10" cy="16.500" r="1" fill="#fff" /></Svg></TrayButton>
          <TrayButton $w={24} aria-label="Volume"><Svg stroke="#fff" sw={1.500}><path d="M1 7.500h3.500L9 3.500v13l-4.500-4H1zM12 7.500c1 1.500 1 3.500 0 5M14.500 5c2.200 3 2.200 7 0 10" /><path d="M17 3c3 4 3 10 0 14" stroke="#857d79" /></Svg></TrayButton>
          <TrayButton $w={36} aria-label="Battery"><Svg stroke="#fff" sw={1.600}><rect x="1" y="4.500" width="15.500" height="11" rx="2.500" /><path d="M19 8.500v3" strokeWidth="2" /><path d="M4 7.500h7v5H4z" fill="#fff" /></Svg></TrayButton>
          <Clock>
            <Stack $align="right"><span>02:40</span><span>10-08-2023</span></Stack>
            <F w={20} vb="0 0 20 20"><path d="M2 15.500V14l1.500-1.500V7c0-4 2.500-6 5.500-6s6 2 6 6v5.500l1.500 1.500v1.500zM6.500 16.500h5a2.500 2.500 0 0 1-5 0z" fill="#fff" /><path d="M6.500 7h4l-4 4.500h4" stroke="#2a2322" strokeWidth="1.400" fill="none" /><path d="M14 1h4l-4 4.500h4" stroke="#fff" strokeWidth="1.400" fill="none" /></F>
          </Clock>
        </Tray>
      </Taskbar>
    </Desktop>
  );
}
